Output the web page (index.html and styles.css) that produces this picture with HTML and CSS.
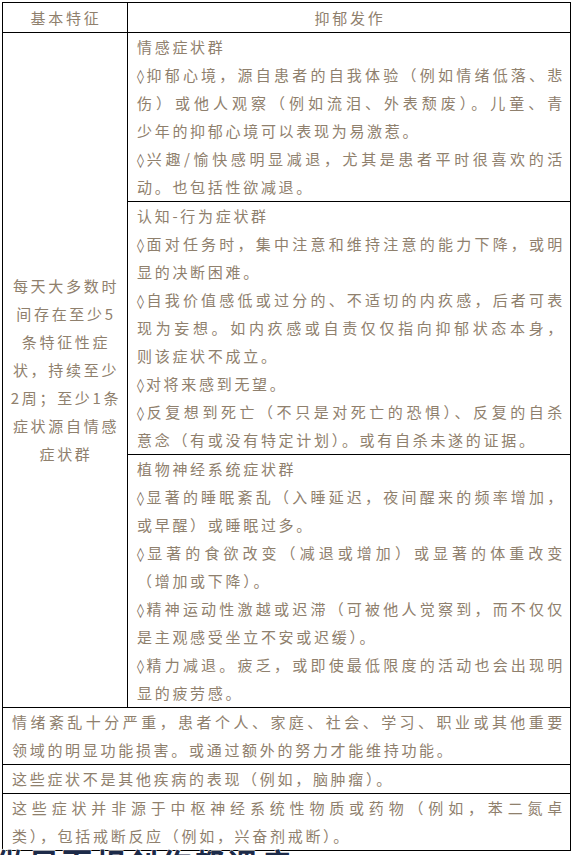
FILE: index.html
```html
<!DOCTYPE html>
<html lang="zh-CN">
<head>
<meta charset="utf-8">
<title>抑郁发作</title>
<link rel="stylesheet" href="styles.css">
</head>
<body>
<table class="grid">
  <colgroup><col class="c1"><col class="c2"></colgroup>
  <tr class="head">
    <th>基本特征</th>
    <th>抑郁发作</th>
  </tr>
  <tr>
    <td class="side" rowspan="3">每天大多数时<br>间存在至少5<br>条特征性症<br>状，持续至少<br>2周；至少1条<br>症状源自情感<br>症状群</td>
    <td class="body">
      <span class="ln">情感症状群</span>
      <span class="ln j"><span class="dia">◊</span>抑郁心境，源自患者的自我体验（例如情绪低落、悲</span>
      <span class="ln j">伤）或他人观察（例如流泪、外表颓废）。儿童、青</span>
      <span class="ln">少年的抑郁心境可以表现为易激惹。</span>
      <span class="ln j"><span class="dia">◊</span>兴趣/愉快感明显减退，尤其是患者平时很喜欢的活</span>
      <span class="ln">动。也包括性欲减退。</span>
    </td>
  </tr>
  <tr>
    <td class="body">
      <span class="ln">认知-行为症状群</span>
      <span class="ln j"><span class="dia">◊</span>面对任务时，集中注意和维持注意的能力下降，或明</span>
      <span class="ln">显的决断困难。</span>
      <span class="ln j"><span class="dia">◊</span>自我价值感低或过分的、不适切的内疚感，后者可表</span>
      <span class="ln j">现为妄想。如内疚感或自责仅仅指向抑郁状态本身，</span>
      <span class="ln">则该症状不成立。</span>
      <span class="ln"><span class="dia">◊</span>对将来感到无望。</span>
      <span class="ln j"><span class="dia">◊</span>反复想到死亡（不只是对死亡的恐惧）、反复的自杀</span>
      <span class="ln">意念（有或没有特定计划）。或有自杀未遂的证据。</span>
    </td>
  </tr>
  <tr>
    <td class="body">
      <span class="ln">植物神经系统症状群</span>
      <span class="ln j"><span class="dia">◊</span>显著的睡眠紊乱（入睡延迟，夜间醒来的频率增加，</span>
      <span class="ln">或早醒）或睡眠过多。</span>
      <span class="ln j"><span class="dia">◊</span>显著的食欲改变（减退或增加）或显著的体重改变</span>
      <span class="ln">（增加或下降）。</span>
      <span class="ln j"><span class="dia">◊</span>精神运动性激越或迟滞（可被他人觉察到，而不仅仅</span>
      <span class="ln">是主观感受坐立不安或迟缓）。</span>
      <span class="ln j"><span class="dia">◊</span>精力减退。疲乏，或即使最低限度的活动也会出现明</span>
      <span class="ln">显的疲劳感。</span>
    </td>
  </tr>
  <tr>
    <td class="wide" colspan="2">
      <span class="ln j">情绪紊乱十分严重，患者个人、家庭、社会、学习、职业或其他重要</span>
      <span class="ln">领域的明显功能损害。或通过额外的努力才能维持功能。</span>
    </td>
  </tr>
  <tr>
    <td class="wide" colspan="2">
      <span class="ln">这些症状不是其他疾病的表现（例如，脑肿瘤）。</span>
    </td>
  </tr>
  <tr>
    <td class="wide" colspan="2">
      <span class="ln j">这些症状并非源于中枢神经系统性物质或药物（例如，苯二氮卓</span>
      <span class="ln">类），包括戒断反应（例如，兴奋剂戒断）。</span>
    </td>
  </tr>
</table>
<div class="mark">做早而相创作都课病</div>
</body>
</html>
```
FILE: styles.css
```css
html, body {
  margin: 0;
  padding: 0;
  height: 855px;
  overflow: hidden;
  background: #ffffff;
}
body {
  position: relative;
  font-family: "Noto Sans CJK SC", "Noto Sans", sans-serif;
  font-size: 15px;
  color: #8f806d;
  letter-spacing: 2.7px;
}
.grid {
  border-collapse: collapse;
  table-layout: fixed;
  width: 569px;
  margin: 2px 0 0 2px;
}
.c1 { width: 125px; }
.grid th, .grid td {
  border: 1px solid #000;
  padding: 0;
  line-height: 28px;
}
.grid .head th {
  font-weight: normal;
  text-align: center;
  line-height: 29px;
  height: 29px;
  padding-left: 2px;
}
.grid .side {
  text-align: center;
  vertical-align: middle;
  padding: 0 3px 0 5px;
}
.grid .body {
  vertical-align: top;
  padding: 0 5px 0 9px;
}
.grid .wide {
  padding: 0 5px 0 9px;
}
.ln {
  display: block;
  height: 28px;
  text-align: left;
  white-space: nowrap;
}
.ln.j {
  white-space: normal;
  text-align: justify;
  text-align-last: justify;
}
.dia {
  font-family: "DejaVu Sans", sans-serif;
  font-size: 14px;
  line-height: 0;
  letter-spacing: 2px;
  color: #7a6a57;
}
.mark {
  position: absolute;
  left: -4px;
  top: 845px;
  font-size: 30px;
  font-weight: bold;
  letter-spacing: 3px;
  color: #1d2b49;
  -webkit-text-stroke: 1px #ffffff;
  paint-order: stroke fill;
  white-space: nowrap;
  line-height: 34px;
}
```
